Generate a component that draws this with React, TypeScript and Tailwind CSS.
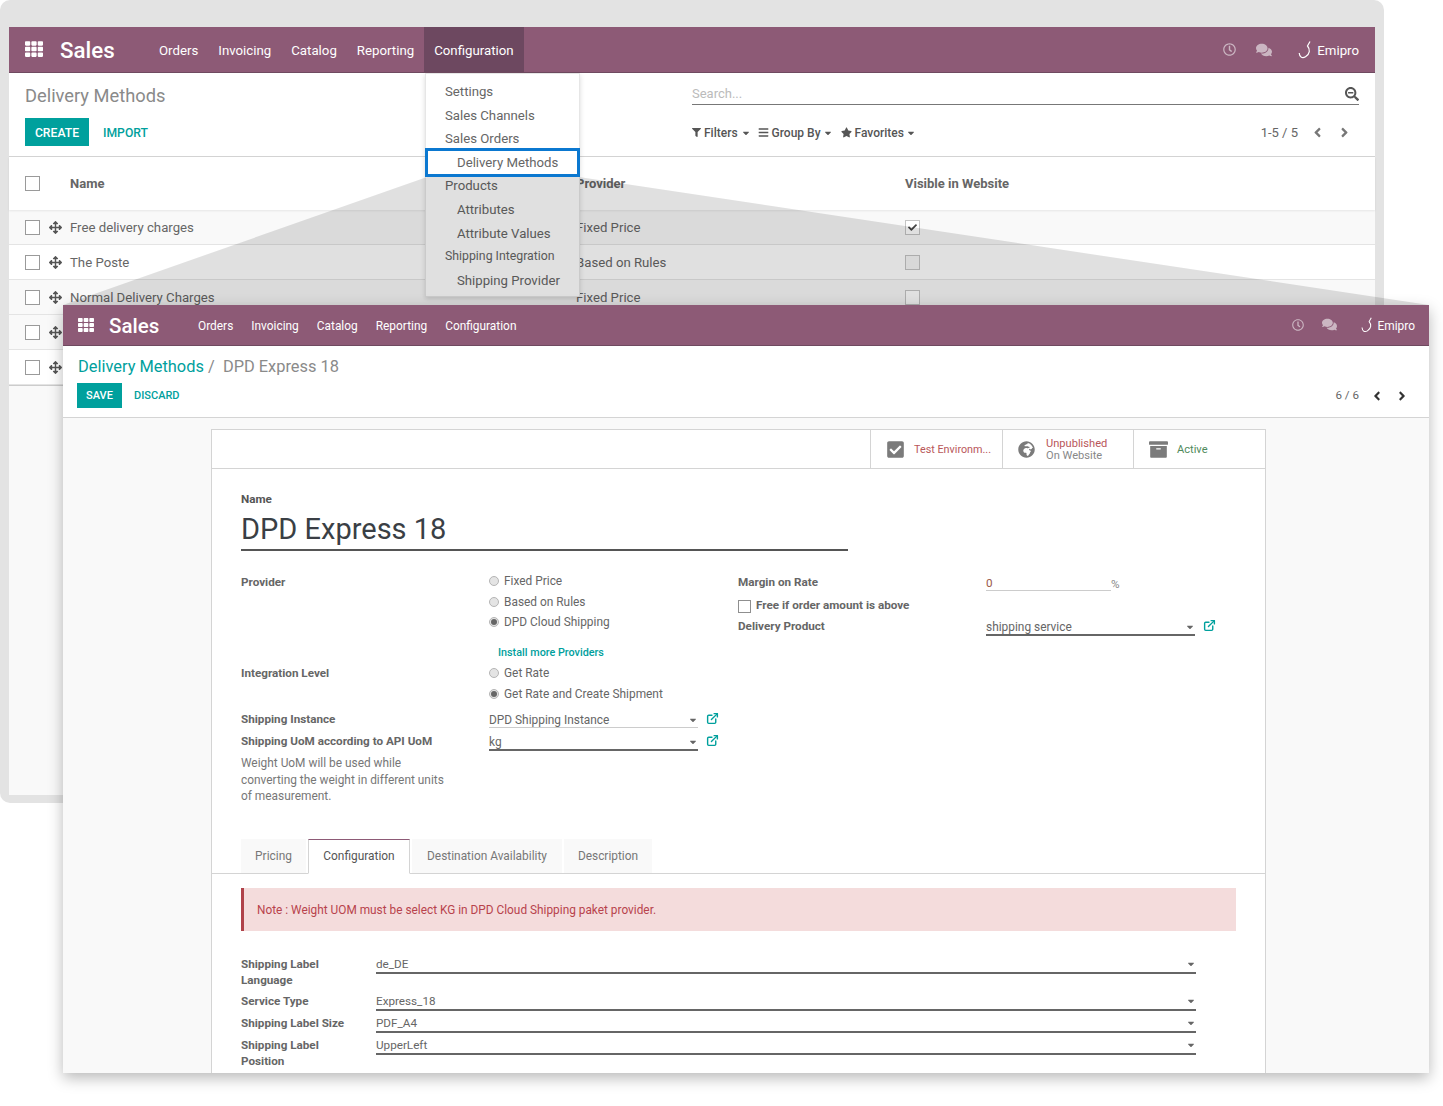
import React from "react";
import { FaTh, FaRegClock, FaComments, FaFilter, FaBars, FaStar, FaAngleLeft, FaAngleRight, FaArrowsAlt, FaCheckSquare, FaGlobeAfrica, FaArchive, FaSearchMinus, FaCheck, FaCaretDown } from "react-icons/fa";
import { FiExternalLink } from "react-icons/fi";

const Hook = ({ cls }: { cls: string }) => (
  <svg viewBox="0 0 14 18" className={cls} fill="none" stroke="#fff" strokeWidth="1.2">
    <path d="M12 0.5 L9.5 5 C12.5 8.5 12 13 7.5 15.8 C4.5 17.6 1.5 16.5 1.2 12" />
  </svg>
);

const Caret = () => <FaCaretDown className="text-[#666] text-[10px]" />;

const Box = () => <span className="w-[15px] h-[15px] border border-[#9a9a9a] bg-white block" />;

const Row = ({ name, provider, visible, shaded }: { name?: string; provider?: string; visible?: boolean; shaded?: boolean }) => (
  <div className={`flex items-center h-[35px] pl-4 border-b border-[#e4e4e4] text-[13.2px] text-[#666] ${shaded ? "bg-[#f9f9f9]" : "bg-white"}`}>
    <span className="w-[24px]"><Box /></span>
    <span className="w-[21px]"><FaArrowsAlt className="text-[#555] text-[13px]" /></span>
    <span className="w-[506px] pt-[2px]">{name}</span>
    <span className="w-[329px] pt-[2px]">{provider}</span>
    {provider && (
      <span className={`w-[15px] h-[15px] border border-[#c4c4c4] flex items-center justify-center ${shaded ? "bg-white" : "bg-[#f6f6f6]"}`}>
        {visible && <FaCheck className="text-[#444] text-[9px]" />}
      </span>
    )}
  </div>
);

const MenuItem = ({ children, sub, narrow }: { children: React.ReactNode; sub?: boolean; narrow?: boolean }) => (
  <div className={`h-[23.6px] leading-[23.6px] text-[#666] ${narrow ? "text-[12.3px]" : "text-[13.2px]"} ${sub ? "pl-[31px]" : "pl-[19px]"}`}>{children}</div>
);

const Radio = ({ on, label }: { on?: boolean; label: string }) => (
  <div className="flex items-center gap-[5px] h-[20.5px] text-[#666] text-[11.9px]">
    <span className="w-[10px] h-[10px] rounded-full border border-[#b5b5b5] bg-[#e4e4e4] flex items-center justify-center">
      {on && <span className="w-[6px] h-[6px] rounded-full bg-[#666]" />}
    </span>
    <span className="pt-[2px]">{label}</span>
  </div>
);

const Select = ({ value, strong }: { value: string; strong?: boolean }) => (
  <div className={`flex items-center justify-between w-[209px] mt-[2px] leading-[14px] text-[11.9px] ${strong ? "border-b-2 border-[#666]" : "border-b border-[#ccc]"}`}>
    <span>{value}</span>
    <Caret />
  </div>
);

const OpenLink = () => (
  <span className="ml-[8px] mt-[1px] shrink-0">
    <FiExternalLink className="text-[#00a09d] text-[13px]" strokeWidth={2.6} />
  </span>
);

const BottomField = ({ label, value, tall }: { label: React.ReactNode; value: string; tall?: boolean }) => (
  <div className="flex items-start">
    <div className={`w-[135px] font-bold text-[#666] leading-[16px] ${tall ? "h-[37px]" : "h-[22px]"}`}>{label}</div>
    <div className="w-[820px] h-[16px] border-b-2 border-[#666] flex items-center justify-between box-content leading-[15px]">
      <span>{value}</span>
      <FaCaretDown className="text-[#666] text-[10px]" />
    </div>
  </div>
);

export default function App() {
  return (
    <div className="relative w-[1443px] h-[1106px] bg-white overflow-hidden" style={{ fontFamily: "Roboto, sans-serif" }}>
      {/* back window */}
      <div className="absolute left-0 top-0 w-[1384px] h-[803px] bg-[#e3e3e3] rounded-[10px] pt-[27px] px-[9px] pb-[8px]">
        <div className="h-full bg-[#f9f9f9] flex flex-col">
          <div className="h-[46px] bg-[#8d5a76] border-b border-[#6f4a60] flex items-center text-white text-[13.25px] shrink-0">
            <FaTh className="ml-[16px] mb-[2px] text-[18px]" />
            <span className="ml-[17px] pt-[3px] text-[22.3px] font-medium w-[54px]">Sales</span>
            <nav className="flex items-center h-full ml-[35px]">
              <span className="px-[10px] pt-[3px]">Orders</span>
              <span className="px-[10px] pt-[3px]">Invoicing</span>
              <span className="px-[10px] pt-[3px]">Catalog</span>
              <span className="px-[10px] pt-[3px]">Reporting</span>
              <span className="px-[10px] pt-[3px] h-full flex items-center bg-[#6d4860]">Configuration</span>
            </nav>
            <div className="ml-auto flex items-center pr-[16px]">
              <FaRegClock className="text-[#cbb6c2] text-[13px]" />
              <FaComments className="ml-[20px] text-[#cbb6c2] text-[16px]" />
              <Hook cls="ml-[26px] w-[14px] h-[18px]" />
              <span className="ml-[5px] pt-[3px]">Emipro</span>
            </div>
          </div>
          <div className="h-[84px] bg-white border-b border-[#d4d4d4] pl-4 pr-4 shrink-0 flex">
            <div className="w-[667px]">
              <div className="mt-[11px] text-[18.3px] text-[#8a8a8a] leading-[24px]">Delivery Methods</div>
              <div className="mt-[10px] flex items-center text-[12.2px] font-medium">
                <span className="bg-[#00a09d] text-white h-[28px] w-[64px] pt-[2px] flex items-center justify-center">CREATE</span>
                <span className="ml-[14px] pt-[2px] text-[#00a09d]">IMPORT</span>
              </div>
            </div>
            <div className="flex-1">
              <div className="mt-[11px] h-[21px] border-b border-[#777] flex items-center justify-between text-[13px] text-[#bbb]">
                <span>Search...</span>
                <FaSearchMinus className="text-[#555] text-[14px]" />
              </div>
              <div className="mt-[18px] flex items-center text-[12px] text-[#555] font-medium">
                <FaFilter className="text-[9px] mr-[3px]" /><span>Filters</span><FaCaretDown className="ml-[3px] text-[10px]" />
                <FaBars className="ml-[7px] text-[11px] mr-[3px]" /><span>Group By</span><FaCaretDown className="ml-[2px] text-[10px]" />
                <FaStar className="ml-[8px] text-[11px] mr-[3px]" /><span>Favorites</span><FaCaretDown className="ml-[2px] text-[10px]" />
                <span className="ml-auto font-normal text-[#666] text-[13px]">1-5 / 5</span>
                <FaAngleLeft className="ml-[12px] text-[15px] text-[#777]" />
                <FaAngleRight className="ml-[12px] mr-[7px] text-[15px] text-[#777]" />
              </div>
            </div>
          </div>
          <div className="h-[53px] bg-white flex items-center pl-4 text-[13px] font-bold text-[#666] shrink-0 shadow-[0_1px_2px_rgba(0,0,0,0.08)] relative">
            <span className="w-[45px]"><Box /></span>
            <span className="w-[506px]">Name</span>
            <span className="w-[329px]">Provider</span>
            <span>Visible in Website</span>
          </div>
          <Row name="Free delivery charges" provider="Fixed Price" visible shaded />
          <Row name="The Poste" provider="Based on Rules" />
          <Row name="Normal Delivery Charges" provider="Fixed Price" shaded />
          <Row shaded />
          <Row />
          <div className="border-t border-[#ccc]" />
        </div>
      </div>

      {/* open dropdown */}
      <div className="absolute left-[425px] top-[73px] w-[155px] h-[224px] bg-white border border-[#e6e6e6] shadow-[0_2px_5px_rgba(0,0,0,0.15)] pt-[6px]">
        <MenuItem>Settings</MenuItem>
        <MenuItem>Sales Channels</MenuItem>
        <MenuItem>Sales Orders</MenuItem>
        <MenuItem sub>Delivery Methods</MenuItem>
        <MenuItem>Products</MenuItem>
        <MenuItem sub>Attributes</MenuItem>
        <MenuItem sub>Attribute Values</MenuItem>
        <MenuItem narrow>Shipping Integration</MenuItem>
        <MenuItem sub>Shipping Provider</MenuItem>
      </div>

      {/* zoom wedge */}
      <svg className="absolute left-0 top-0 w-[1443px] h-[1106px] pointer-events-none" viewBox="0 0 1443 1106">
        <polygon points="427,177 579,177 1429,305 63,305" fill="rgba(0,0,0,0.12)" />
      </svg>
      <div className="absolute left-[425px] top-[148px] w-[155px] h-[29px] border-[3px] border-[#0b78d0]" />

      {/* front window */}
      <div className="absolute left-[63px] top-[305px] w-[1366px] h-[768px] bg-[#f9f9f9] shadow-[0_5px_14px_rgba(0,0,0,0.28)] flex flex-col overflow-hidden text-[11.7px]">
        <div className="h-[41px] bg-[#8d5a76] border-b border-[#6f4a60] flex items-center text-white text-[11.9px] shrink-0">
          <FaTh className="ml-[15px] text-[16px]" />
          <span className="ml-[15px] pt-[2px] text-[20.5px] font-medium w-[49px]">Sales</span>
          <nav className="flex items-center ml-[40px] gap-[18px] pt-[3px]">
            <span>Orders</span>
            <span>Invoicing</span>
            <span>Catalog</span>
            <span>Reporting</span>
            <span>Configuration</span>
          </nav>
          <div className="ml-auto flex items-center pr-[14px]">
            <FaRegClock className="text-[#cbb6c2] text-[12px]" />
            <FaComments className="ml-[18px] text-[#cbb6c2] text-[15px]" />
            <Hook cls="ml-[24px] w-[12px] h-[16px]" />
            <span className="ml-[5px] pt-[3px]">Emipro</span>
          </div>
        </div>
        <div className="h-[72px] bg-white border-b border-[#d4d4d4] pl-[14px] pr-[20px] shrink-0">
          <div className="pt-[9px] pl-px text-[16.4px] leading-[23px]">
            <span className="text-[#00a09d]">Delivery Methods</span>
            <span className="text-[#8a8a8a]"> /&nbsp; DPD Express 18</span>
          </div>
          <div className="mt-[5px] flex items-center font-medium text-[11px]">
            <span className="bg-[#00a09d] text-white w-[45px] h-[25px] pt-px flex items-center justify-center">SAVE</span>
            <span className="ml-[12px] pt-px text-[#00a09d]">DISCARD</span>
            <span className="ml-auto font-normal text-[#666] text-[11.6px]">6 / 6</span>
            <FaAngleLeft className="ml-[11px] text-[14px] text-[#333]" />
            <FaAngleRight className="ml-[11px] text-[14px] text-[#333]" />
          </div>
        </div>
        <div className="flex-1 min-h-0 pt-[11px]">
          <div className="ml-[148px] w-[1055px] h-full bg-white border border-b-0 border-[#d4d4d4] text-[#666] overflow-hidden">
            <div className="h-[39px] border-b border-[#d4d4d4] flex justify-end text-[11.1px]">
              <div className="w-[132px] border-l border-[#d4d4d4] flex items-center pl-[15px] gap-[9px]">
                <FaCheckSquare className="text-[#7b7b7b] text-[19px]" />
                <span className="pt-[2px] text-[#b9575a] text-[10.8px]">Test Environm...</span>
              </div>
              <div className="w-[131px] border-l border-[#d4d4d4] flex items-center pl-[15px] gap-[11px]">
                <FaGlobeAfrica className="text-[#7b7b7b] text-[17px]" />
                <span className="leading-[12px] pt-[2px]"><span className="block text-[#b9575a]">Unpublished</span><span className="block text-[#888]">On Website</span></span>
              </div>
              <div className="w-[132px] border-l border-[#d4d4d4] flex items-center pl-[15px] gap-[9px]">
                <FaArchive className="text-[#7b7b7b] text-[19px]" />
                <span className="pt-[2px] text-[#4f8a5b]">Active</span>
              </div>
            </div>

            <div className="pl-[29px]">
              <div className="pt-[23px] font-bold text-[#555] leading-[14px]">Name</div>
              <div className="w-[607px] mt-[4px] h-[41px] border-b-2 border-[#555] text-[#3a3f45] text-[29px] leading-[38px]">DPD Express 18</div>

              <div className="mt-[20px] flex h-[258px]">
                <div className="w-[497px]">
                  <div className="flex h-[92px]">
                    <div className="w-[248px] font-bold pt-[3px]">Provider</div>
                    <div>
                      <Radio label="Fixed Price" />
                      <Radio label="Based on Rules" />
                      <Radio on label="DPD Cloud Shipping" />
                      <div className="pl-[9px] mt-[12px] text-[#00a09d] font-medium text-[10.8px]">Install more Providers</div>
                    </div>
                  </div>
                  <div className="flex h-[48px]">
                    <div className="w-[248px] font-bold pt-[2px]">Integration Level</div>
                    <div>
                      <Radio label="Get Rate" />
                      <Radio on label="Get Rate and Create Shipment" />
                    </div>
                  </div>
                  <div className="flex h-[22px] items-start">
                    <div className="w-[248px] font-bold">Shipping Instance</div>
                    <Select value="DPD Shipping Instance" />
                    <OpenLink />
                  </div>
                  <div className="flex h-[21px] items-start">
                    <div className="w-[248px] font-bold">Shipping UoM according to API UoM</div>
                    <Select value="kg" strong />
                    <OpenLink />
                  </div>
                  <div className="w-[208px] mt-px leading-[16.5px] text-[#777] text-[11.9px]">Weight UoM will be used while converting the weight in different units of measurement.</div>
                </div>
                <div className="flex-1">
                  <div className="flex h-[25px] items-start pt-[3px]">
                    <div className="w-[248px] font-bold">Margin on Rate</div>
                    <div className="w-[125px] h-[17px] border-b border-[#ccc] leading-[14px] pt-[2px] text-[#9a5a4a]">0</div>
                    <span className="text-[#888] pt-[2px]">%</span>
                  </div>
                  <div className="flex items-start h-[22px] pt-[1px] font-bold">
                    <span className="w-[13px] h-[13px] border border-[#8f8f8f] mr-[5px] mt-[3px]" />
                    Free if order amount is above
                  </div>
                  <div className="flex items-start h-[22px]">
                    <div className="w-[248px] font-bold">Delivery Product</div>
                    <div className="pb-px"><Select value="shipping service" strong /></div>
                    <OpenLink />
                  </div>
                </div>
              </div>
            </div>

            <div className="mt-[10px] h-[35px] border-b border-[#d4d4d4] pl-[29px] flex items-end gap-[2px] text-[11.9px]">
              <span className="w-[65px] h-[34px] pt-px bg-[#f9f9f9] flex items-center justify-center text-[#777]">Pricing</span>
              <span className="w-[102px] h-[35px] bg-white border border-[#d4d4d4] border-b-white border-t-[#8d5a76] flex items-center justify-center text-[#555] -mb-px">Configuration</span>
              <span className="w-[150px] h-[34px] pt-px bg-[#f9f9f9] flex items-center justify-center text-[#777]">Destination Availability</span>
              <span className="w-[88px] h-[34px] pt-px bg-[#f9f9f9] flex items-center justify-center text-[#777]">Description</span>
            </div>

            <div className="pl-[29px] pt-[14px]">
              <div className="w-[995px] h-[43px] pt-[2px] bg-[#f4dcdc] border-l-[3px] border-[#b0424a] flex items-center pl-[13px] text-[#b8434c] text-[11.85px]">
                Note : Weight UOM must be select KG in DPD Cloud Shipping paket provider.
              </div>
              <div className="mt-[25px] flex flex-col">
                <BottomField label={<>Shipping Label<br />Language</>} value="de_DE" tall />
                <BottomField label="Service Type" value="Express_18" />
                <BottomField label="Shipping Label Size" value="PDF_A4" />
                <BottomField label={<>Shipping Label<br />Position</>} value="UpperLeft" tall />
              </div>
            </div>
          </div>
        </div>
      </div>
    </div>
  );
}
